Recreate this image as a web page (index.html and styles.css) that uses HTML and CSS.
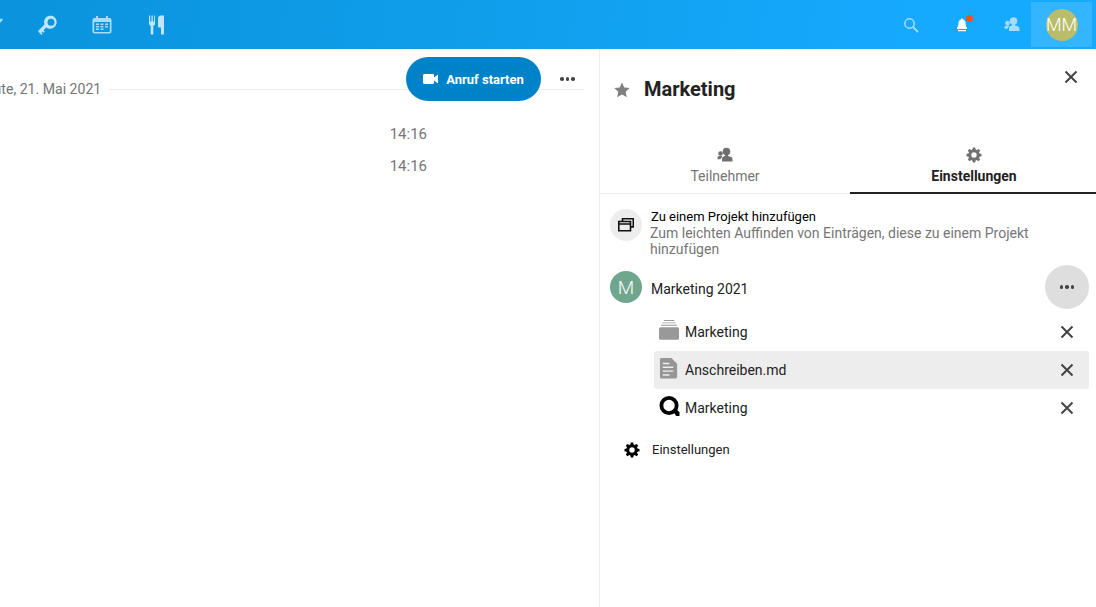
FILE: index.html

```html
<!DOCTYPE html>
<html lang="de">
<head>
  <meta charset="UTF-8" />
  <title>Marketing - Talk</title>
  <link rel="stylesheet" href="styles.css">
</head>
<body>

  <header class="topbar">
    <nav class="apps">
      <svg class="app-icon app-check" viewBox="0 0 20 20"><path d="M13 10.500l6-6.500" stroke="#a9dcfb" stroke-width="2.400" fill="none"/></svg>
      <svg class="app-icon" viewBox="0 0 20 20"><path fill="#bfe6fd" fill-rule="evenodd" d="M12.800.5a6.700 6.700 0 0 0-6.300 9L.3 15.700l.1 1.100 2.700 2.700 1-.1.600-.6-1.300-1.400 1-1 1.400 1.300 1-1-1.400-1.300 2.700-2.800a6.700 6.700 0 1 0 2.700-12.100zm.2 3.200a3.500 3.500 0 1 1 0 7 3.500 3.500 0 0 1 0-7z"/></svg>
      <svg class="app-icon" viewBox="0 0 20 20"><path fill="#a9dcfb" fill-rule="evenodd" d="M4 1h2v2h8V1h2v2h1.500A2 2 0 0 1 19.500 5v11.500a2 2 0 0 1-2 2h-15a2 2 0 0 1-2-2V5a2 2 0 0 1 2-2H4zM2.200 7v9.200c0 .4.300.7.700.7h14.200c.4 0 .7-.3.700-.7V7zM4 8.500h3V10H4zm4.500 0h3V10h-3zm4.500 0h3V10h-3zM4 11h3v1.500H4zm4.500 0h3v1.500h-3zm4.500 0h3v1.500h-3zM4 13.500h3V15H4zm4.500 0h3V15h-3z"/></svg>
      <svg class="app-icon" viewBox="0 0 20 20"><path fill="#bfe6fd" d="M2 .5h1.200v6h1.300v-6h1.300v6h1.300v-6H8v8.200c0 1-.7 1.800-1.700 2v8.800H3.700v-8.800A2 2 0 0 1 2 8.700zM11 19.500V3c0-1.500 1.500-2.500 3-2.500h3v19h-3v-7h-2a1 1 0 0 1-1-1z"/></svg>
    </nav>
    <div class="status">
      <svg class="status-icon status-search" viewBox="0 0 16 16"><circle cx="6.500" cy="6.500" r="4.700" fill="none" stroke="#a9dcfb" stroke-width="1.500"/><path d="M10 10l5 5" stroke="#a9dcfb" stroke-width="1.800"/></svg>
      <span class="bell">
        <svg class="status-icon" viewBox="0 0 16 16"><path fill="#fff" d="M8 1.500c.6 0 1 .5 1.100 1.100 1.700.5 2.500 2.100 2.500 4.200 0 2 .5 3 1.400 4V12H3v-1.200c.9-1 1.400-2 1.400-4 0-2.100.8-3.700 2.500-4.200.1-.6.500-1.100 1.100-1.100zM4 13h8v1.200H4z"/></svg>
        <i class="bell-dot"></i>
      </span>
      <svg class="status-icon status-people" viewBox="0 0 16 16"><circle cx="9.500" cy="5" r="3.800" fill="#a9dcfb"/><circle cx="3.500" cy="7" r="2.300" fill="#a9dcfb"/><path fill="#a9dcfb" d="M8 8h3v1.500c2.500.4 4.500 1.200 4.500 3V15H5v-2.500c0-1.800 1-2.600 3-3zM2 9.500h3v1.300c-.8.400-1.300 1-1.500 2H.5v-1.300c0-1 .7-1.500 1.500-2z"/></svg>
      <div class="user-box"><div class="user-avatar">MM</div></div>
    </div>
  </header>

  <main class="content">
    <section class="chat">
      <div class="date-row">
        <span class="date-label">Heute, 21. Mai 2021</span>
        <span class="date-line"></span>
      </div>
      <div class="call-actions">
        <button class="call-btn">
          <svg class="call-icon" viewBox="0 0 16 16"><path fill="#fff" d="M1.500 3h8.300c.7 0 1.200.5 1.200 1.200V6.500L15 3.500v9l-4-3v2.300c0 .7-.5 1.200-1.200 1.200H1.500C.7 13 0 12.300 0 11.500v-7C0 3.700.7 3 1.500 3z"/></svg>
          Anruf starten
        </button>
        <span class="dots"><i></i><i></i><i></i></span>
      </div>
      <div class="time time-first">14:16</div>
      <div class="time">14:16</div>
    </section>

    <aside class="sidebar">
      <div class="side-head">
        <svg class="star" viewBox="0 0 16 16"><path fill="#808080" d="M8 .5l2.300 5 5.400.6-4 3.700 1.100 5.400L8 12.500l-4.800 2.700 1.100-5.400-4-3.700 5.400-.6z"/></svg>
        <h2 class="side-title">Marketing</h2>
        <svg class="close" viewBox="0 0 14 14"><path d="M1.500 1.500l11 11M12.500 1.500l-11 11" stroke="#444" stroke-width="2"/></svg>
      </div>

      <div class="tabs">
        <div class="tab">
          <svg class="tab-icon" viewBox="0 0 16 16"><circle cx="9.500" cy="4.500" r="3.800" fill="#707070"/><circle cx="3.500" cy="6.500" r="2.300" fill="#707070"/><path fill="#707070" d="M8 7.500h3V9c2.500.4 4.500 1.200 4.500 3v2.500H5V12c0-1.800 1-2.600 3-3zM2 9h3v1.300c-.8.400-1.300 1-1.500 2H.5V11c0-1 .7-1.500 1.500-2z"/></svg>
          <span>Teilnehmer</span>
        </div>
        <div class="tab tab-active">
          <svg class="tab-icon" viewBox="0 0 16 16"><path fill="#707070" fill-rule="evenodd" d="M6.800.5h2.400l.4 2.100 1.100.5 1.800-1.200 1.700 1.700-1.200 1.800.5 1.100 2 .4v2.400l-2 .4-.5 1.100 1.200 1.800-1.700 1.700-1.800-1.200-1.100.5-.4 2H6.800l-.4-2-1.100-.5-1.800 1.200-1.700-1.700L3 10.800l-.5-1.100-2-.4V6.900l2-.4.500-1.100-1.200-1.800 1.700-1.700 1.800 1.200 1.100-.5zM8 5.300a2.700 2.700 0 1 0 0 5.400 2.700 2.700 0 0 0 0-5.400z"/></svg>
          <span>Einstellungen</span>
        </div>
      </div>

      <div class="project-add">
        <div class="round round-grey">
          <svg class="project-icon" viewBox="0 0 16 16"><path fill="none" stroke="#111" stroke-width="1.600" d="M4.500 4.500V1.700h10.800v8.200H12.500M.8 4.500h11.700v9.300H.8zM.8 7h11.700"/></svg>
        </div>
        <div class="project-text">
          <div class="project-title">Zu einem Projekt hinzufügen</div>
          <div class="project-sub">Zum leichten Auffinden von Einträgen, diese zu einem Projekt hinzufügen</div>
        </div>
      </div>

      <div class="project">
        <div class="round round-green">M</div>
        <span class="project-name">Marketing 2021</span>
        <span class="round-more"><span class="dots"><i></i><i></i><i></i></span></span>
      </div>

      <ul class="items">
        <li class="item">
          <svg class="item-icon" viewBox="0 0 22 22"><path fill="#999" d="M5 0h11v1H5zM3.500 2.500h14v1h-14zM2 5h17v1H2zM2 7.500h17c1 0 2 .7 2 1.800V19c0 1-.9 1.800-2 1.800H2c-1.100 0-2-.8-2-1.800V9.300c0-1.100 1-1.800 2-1.800z"/></svg>
          <span class="item-name">Marketing</span>
          <svg class="item-close" viewBox="0 0 14 14"><path d="M1.500 1.500l11 11M12.500 1.500l-11 11" stroke="#444" stroke-width="2"/></svg>
        </li>
        <li class="item item-selected">
          <svg class="item-icon" viewBox="0 0 22 22"><path fill="#969696" fill-rule="evenodd" d="M3 0h10l6 6v14c0 .9-.7 1.500-1.500 1.500h-15C1.700 21.500 1 20.900 1 20V1.500C1 .7 1.700 0 3 0zm1 5v1.500h7V5zm0 4v1.500h11V9zm0 4v1.500h11V13zm0 4v1.500h7V17z"/></svg>
          <span class="item-name">Anschreiben.md</span>
          <svg class="item-close" viewBox="0 0 14 14"><path d="M1.500 1.500l11 11M12.500 1.500l-11 11" stroke="#444" stroke-width="2"/></svg>
        </li>
        <li class="item">
          <svg class="item-icon" viewBox="0 0 22 22"><circle cx="10.500" cy="10" r="8" fill="none" stroke="#000" stroke-width="4"/><path d="M14 15l4 6h3.500v-4l-4-4z" fill="#000"/></svg>
          <span class="item-name">Marketing</span>
          <svg class="item-close" viewBox="0 0 14 14"><path d="M1.500 1.500l11 11M12.500 1.500l-11 11" stroke="#444" stroke-width="2"/></svg>
        </li>
      </ul>

      <div class="side-settings">
        <svg class="settings-icon" viewBox="0 0 16 16"><path fill="#000" fill-rule="evenodd" d="M6.800.5h2.400l.4 2.100 1.100.5 1.800-1.200 1.700 1.700-1.200 1.800.5 1.100 2 .4v2.400l-2 .4-.5 1.100 1.200 1.800-1.700 1.700-1.800-1.200-1.100.5-.4 2H6.800l-.4-2-1.100-.5-1.800 1.200-1.700-1.700L3 10.800l-.5-1.100-2-.4V6.900l2-.4.500-1.100-1.200-1.800 1.700-1.700 1.800 1.200 1.100-.5zM8 5.300a2.700 2.700 0 1 0 0 5.400 2.700 2.700 0 0 0 0-5.400z"/></svg>
        <span>Einstellungen</span>
      </div>
    </aside>
  </main>

</body>
</html>
```

FILE: styles.css

```css
* {
  box-sizing: border-box;
}

html, body {
  height: 100%;
}

body {
  margin: 0;
  overflow: hidden;
  font-family: Roboto, "Liberation Sans", sans-serif;
  font-size: 14px;
  color: #222;
  background-color: #fff;
  display: flex;
  flex-direction: column;
}

.topbar {
  height: 49px;
  flex: none;
  display: flex;
  justify-content: space-between;
  background: linear-gradient(100deg, #0b93dd 0%, #0f9de9 40%, #16aaff 85%);
}

.apps {
  display: flex;
  align-items: center;
  gap: 34.5px;
}

.app-icon {
  width: 20px;
  height: 20px;
  flex: none;
}

.app-check {
  margin-left: -17px;
}

.status {
  display: flex;
  align-items: center;
  padding-right: 4px;
}

.status-icon {
  width: 16px;
  height: 16px;
  display: block;
}

.status-search {
  margin-right: 35px;
}

.status-people {
  margin-top: -1px;
}

.bell {
  position: relative;
  margin-right: 34px;
}

.bell-dot {
  position: absolute;
  top: -2px;
  right: -3px;
  width: 7px;
  height: 7px;
  border-radius: 50%;
  background-color: #f4511e;
}

.user-box {
  width: 61px;
  height: 45px;
  margin-left: 11px;
  display: flex;
  align-items: center;
  justify-content: center;
  background-color: rgba(255, 255, 255, 0.13);
}

.user-avatar {
  width: 32px;
  height: 32px;
  border-radius: 50%;
  background-color: #b9bd6a;
  color: #fff;
  font-size: 18px;
  font-weight: 300;
  line-height: 32px;
  white-space: nowrap;
  display: flex;
  justify-content: center;
}

.content {
  flex: 1;
  display: flex;
  min-height: 0;
}

.chat {
  width: 600px;
  flex: none;
  position: relative;
  overflow: hidden;
  border-right: 1px solid #ededed;
  padding-top: 30px;
}

.date-row {
  display: flex;
  align-items: center;
  gap: 8px;
  width: 584px;
  color: #767676;
}

.date-label {
  flex: none;
  margin-left: -24px;
  line-height: 20px;
  font-size: 14.1px;
}

.date-line {
  flex: 1;
  height: 1px;
  background-color: #ededed;
}

.call-actions {
  position: absolute;
  top: 8px;
  left: 406px;
  display: flex;
  align-items: center;
  gap: 19px;
}

.call-btn {
  height: 44px;
  width: 135px;
  border: none;
  border-radius: 22px;
  background-color: #0082c9;
  color: #fff;
  font-family: inherit;
  font-size: 13px;
  font-weight: 700;
  display: flex;
  align-items: center;
  justify-content: center;
  gap: 7px;
  padding: 0;
}

.call-icon {
  width: 16px;
  height: 16px;
}

.dots {
  display: flex;
  gap: 2px;
}

.dots i {
  width: 3.500px;
  height: 3.500px;
  border-radius: 50%;
  background-color: #444;
}

.time {
  width: 427px;
  margin-top: 12px;
  text-align: right;
  font-size: 15px;
  line-height: 20px;
  color: #767676;
}

.time-first {
  margin-top: 25px;
}

.sidebar {
  flex: 1;
  min-width: 0;
  display: flex;
  flex-direction: column;
}

.side-head {
  height: 88px;
  flex: none;
  display: flex;
  align-items: flex-start;
  padding: 28px 18px 0 14px;
}

.star {
  width: 16px;
  height: 16px;
  margin: 5px 14px 0 0;
}

.side-title {
  margin: 0;
  font-size: 20px;
  font-weight: 700;
  line-height: 24px;
  color: #222;
  flex: 1;
}

.close {
  width: 14px;
  height: 14px;
  margin-top: -7px;
}

.tabs {
  display: flex;
  height: 57px;
  flex: none;
  border-bottom: 1px solid #ededed;
}

.tab {
  flex: 0 0 250px;
  display: flex;
  flex-direction: column;
  align-items: center;
  padding-top: 10px;
  color: #767676;
  line-height: 20px;
}

.tab-active {
  flex: 0 0 248px;
  height: 57px;
  color: #222;
  font-weight: 700;
  border-bottom: 2px solid #222;
}

.tab-icon {
  width: 16px;
  height: 16px;
  margin-bottom: 3px;
}

.project-add {
  display: flex;
  gap: 8px;
  padding: 15px 40px 0 10px;
}

.round {
  width: 32px;
  height: 32px;
  flex: none;
  border-radius: 50%;
  display: flex;
  align-items: center;
  justify-content: center;
}

.round-grey {
  background-color: #ededed;
}

.round-green {
  background-color: #70a68e;
  color: #fff;
  font-size: 19px;
  font-weight: 300;
}

.project-icon {
  width: 16px;
  height: 16px;
}

.project-title {
  font-size: 13px;
  line-height: 16px;
  color: #000;
  margin-left: 1px;
}

.project-sub {
  color: #767676;
  line-height: 16px;
}

.project {
  display: flex;
  align-items: center;
  height: 44px;
  margin-top: 8px;
  padding: 0 7px 0 10px;
}

.project-name {
  flex: 1;
  margin: 4px 0 0 9px;
}

.round-more {
  width: 44px;
  height: 44px;
  border-radius: 50%;
  background-color: #dedede;
  display: flex;
  align-items: center;
  justify-content: center;
}

.items {
  list-style: none;
  margin: 4px 7px 0 54px;
  padding: 0;
}

.item {
  height: 38px;
  display: flex;
  align-items: center;
  padding: 0 15px 0 5px;
  border-radius: 3px;
}

.item-selected {
  background-color: #ededed;
}

.item-icon {
  width: 21px;
  height: 21px;
  margin: -4px 5px 0 0;
  flex: none;
}

.item-name {
  flex: 1;
}

.item-close {
  width: 14px;
  height: 14px;
}

.side-settings {
  display: flex;
  align-items: center;
  gap: 12px;
  padding: 13px 0 0 24px;
  font-size: 13px;
  line-height: 20px;
}

.settings-icon {
  width: 16px;
  height: 16px;
}
```
